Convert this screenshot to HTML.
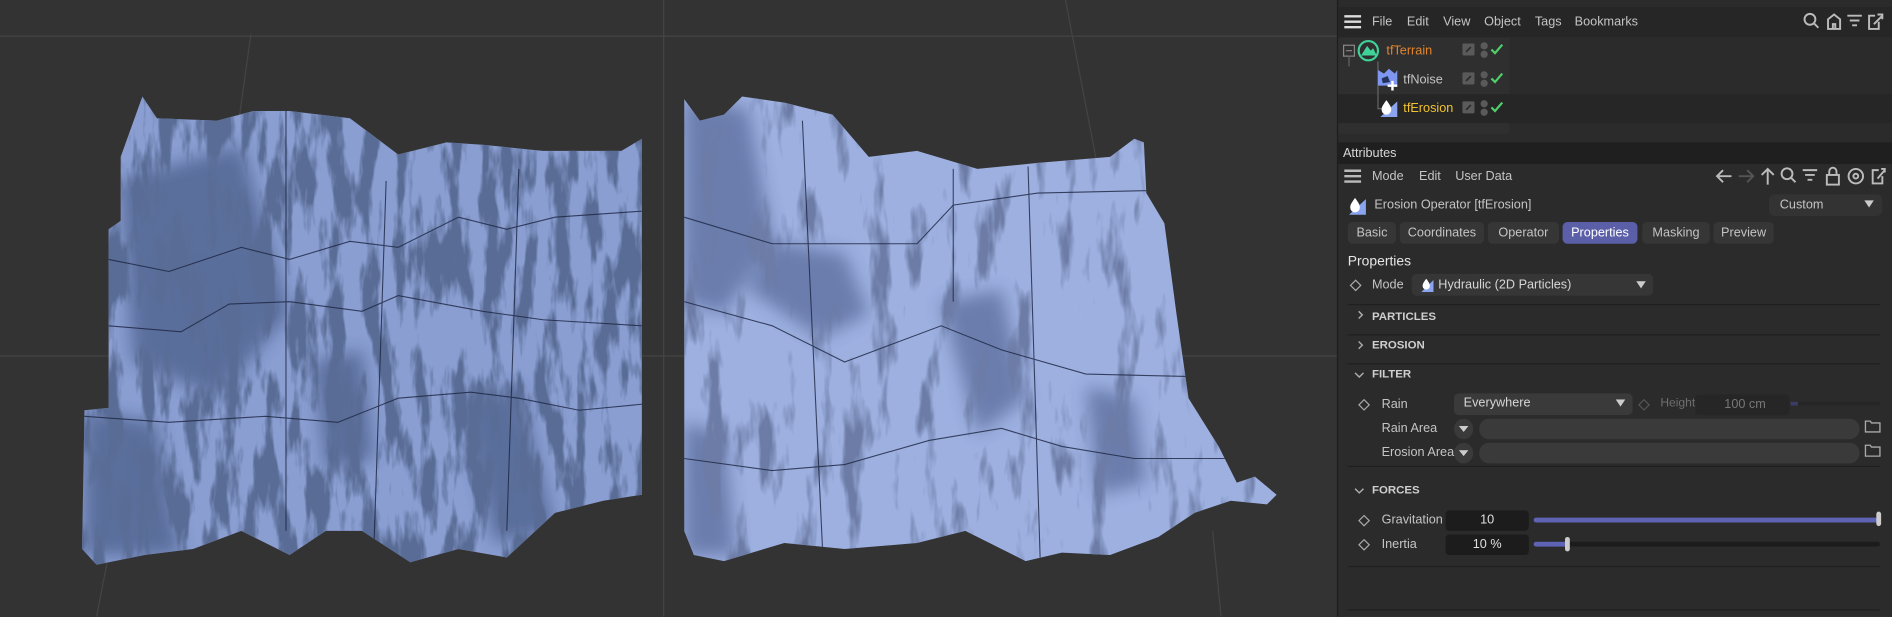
<!DOCTYPE html>
<html><head><meta charset="utf-8">
<style>
*{margin:0;padding:0;box-sizing:border-box}
html,body{width:1892px;height:616px;overflow:hidden;background:#333}
#root{position:absolute;left:0;top:0;width:1568px;height:511px;transform:scale(1.20663);transform-origin:0 0;font-family:"Liberation Sans",sans-serif;font-size:10.5px;color:#c4c4c4}
.a{position:absolute;white-space:nowrap}
.t{line-height:12px;margin-top:-6px}
.hr{position:absolute;height:1px;background:#1f1f1f;left:1117px;width:441px}
.tab{position:absolute;top:184px;height:18px;background:#363636;border-radius:4px;line-height:18px;text-align:center;color:#c4c4c4}
.dia{position:absolute;width:7px;height:7px;border:1.3px solid #aaa;transform:rotate(45deg)}
.sec{font-weight:bold;font-size:9.5px;color:#cfcfcf}
</style></head><body><div id="root">
<svg class="a" style="left:0;top:0" width="1108" height="511" viewBox="0 0 1108 511">
<defs>
<filter id="n1" x="0" y="0" width="100%" height="100%">
<feTurbulence type="fractalNoise" baseFrequency="0.07 0.016" numOctaves="4" seed="3" result="t"/>
<feColorMatrix in="t" type="matrix" values="0 0 0 0 0.1  0 0 0 0 0.15  0 0 0 0 0.3  6 0 0 0 -2.7"/>
</filter>
<filter id="n2" x="0" y="0" width="100%" height="100%">
<feTurbulence type="fractalNoise" baseFrequency="0.05 0.012" numOctaves="4" seed="7" result="t"/>
<feColorMatrix in="t" type="matrix" values="0 0 0 0 0.15  0 0 0 0 0.2  0 0 0 0 0.38  6 0 0 0 -3.3"/>
</filter>
<filter id="bl"><feGaussianBlur stdDeviation="7"/></filter>
<clipPath id="c1"><path d="M118 80 L130 98 L180 100 L210 92 L240 92 L290 98 L330 128 L370 118 L400 120 L450 125 L515 125 L532 115 L532 410 L500 415 L460 425 L420 462 L380 455 L340 466 L300 440 L270 440 L240 460 L200 440 L160 455 L120 460 L80 468 L68 455 L70 340 L90 338 L90 190 L100 183 L100 130 Z"/></clipPath>
<clipPath id="c2"><path d="M567 82 L580 100 L600 95 L615 80 L650 85 L690 95 L720 130 L760 125 L810 140 L860 135 L920 130 L940 115 L948 118 L950 160 L965 185 L975 260 L985 330 L1010 370 L1025 400 L1040 395 L1058 410 L1050 418 L1020 415 L990 425 L960 445 L920 460 L880 458 L850 465 L800 440 L760 450 L700 455 L650 450 L600 465 L575 460 L567 440 Z"/></clipPath>
</defs>
<line x1="0" y1="30" x2="1108" y2="30" stroke="#464646"/>
<line x1="0" y1="295" x2="1108" y2="295" stroke="#464646"/>
<line x1="550" y1="0" x2="550" y2="511" stroke="#464646"/>
<line x1="208" y1="28" x2="170" y2="300" stroke="#444"/>
<line x1="883" y1="0" x2="910" y2="140" stroke="#444"/>
<line x1="90" y1="460" x2="80" y2="511" stroke="#444"/>
<line x1="1005" y1="440" x2="1012" y2="511" stroke="#444"/>
<g clip-path="url(#c1)">
<rect x="60" y="70" width="480" height="410" fill="#8a9ed2"/>
<g filter="url(#bl)" fill="#24345c" opacity=".45">
<path d="M100 150 L200 120 L240 260 L180 330 L110 300Z"/>
<path d="M70 340 L130 350 L150 460 L70 460Z"/>
<path d="M380 330 L430 320 L460 440 L410 450Z"/>
<path d="M260 300 L300 290 L310 380 L270 390Z"/>
</g>
<rect x="60" y="70" width="480" height="410" filter="url(#n1)"/>
<g fill="none" stroke="#1b2440" stroke-width="0.9" opacity=".8">
<polyline points="90,215 140,225 200,205 240,215 290,200 330,205 380,180 420,190 460,180 532,175"/>
<polyline points="90,270 150,275 190,252 240,250 300,258 330,245 400,258 450,265 532,270"/>
<polyline points="70,345 140,350 220,345 280,350 330,330 390,325 430,330 480,340 532,335"/>
<line x1="237" y1="90" x2="237" y2="440"/><line x1="320" y1="150" x2="310" y2="450"/><line x1="430" y1="140" x2="420" y2="440"/>
</g>
</g>
<g clip-path="url(#c2)">
<rect x="560" y="70" width="510" height="410" fill="#9db0e0"/>
<g filter="url(#bl)" fill="#2f4070" opacity=".45">
<path d="M567 82 L620 90 L640 200 L600 260 L567 250Z"/>
<path d="M640 200 L700 210 L720 260 L680 280 L620 240Z"/>
<path d="M780 250 L830 240 L850 330 L810 360Z"/>
<path d="M567 350 L600 360 L610 460 L567 460Z"/>
<path d="M900 320 L940 330 L950 400 L910 410Z"/>
</g>
<rect x="560" y="70" width="510" height="410" filter="url(#n2)"/>
<g fill="none" stroke="#1b2440" stroke-width="0.9" opacity=".8">
<polyline points="567,180 640,202 760,202 790,170 860,160 950,158"/>
<polyline points="567,250 640,270 700,300 780,270 830,290 900,310 985,312"/>
<polyline points="567,380 640,390 700,385 770,365 830,355 880,370 940,380 1015,380"/>
<line x1="665" y1="100" x2="682" y2="462"/><line x1="852" y1="138" x2="862" y2="462"/><line x1="790" y1="140" x2="790" y2="250"/>
</g>
</g>
</svg>
<!-- panel -->
<div class="a" style="left:1108px;top:0;width:460px;height:511px;background:#2b2b2b;border-left:1px solid #1e1e1e"></div>
<div class="a" style="left:1109px;top:6px;width:459px;height:25px;background:#262626"></div>
<div class="a" style="left:1109px;top:31px;width:142px;height:80px;background:#2f2f2f"></div>
<div class="a" style="left:1109px;top:78px;width:459px;height:24px;background:#262626"></div>
<div class="a" style="left:1109px;top:118px;width:459px;height:18px;background:#1f1f1f"></div>
<svg class="a" style="left:1114px;top:12px" width="15" height="12"><path d="M0 1.5H14M0 6H14M0 10.5H14" stroke="#ddd" stroke-width="2"/></svg>
<div class="a t" style="left:1137px;top:18px">File</div>
<div class="a t" style="left:1166px;top:18px">Edit</div>
<div class="a t" style="left:1196px;top:18px">View</div>
<div class="a t" style="left:1230px;top:18px">Object</div>
<div class="a t" style="left:1272px;top:18px">Tags</div>
<div class="a t" style="left:1305px;top:18px">Bookmarks</div>
<svg class="a" style="left:1494px;top:10px" width="70" height="16" fill="none" stroke="#bbb" stroke-width="1.6">
<circle cx="6" cy="6" r="4.5"/><path d="M9.5 9.5L13 13"/>
<path d="M21 14V6L26 2L31 6V14ZM25 14V10H27V14"/>
<path d="M37 3H49M39 7H47M41 11H45"/>
<path d="M63 8V14H55V3H60M59 10L66 3M62 2H66V6"/>
</svg>
<!-- tree -->
<svg class="a" style="left:1112px;top:32px" width="140" height="75" fill="none">
<rect x="1.5" y="5.5" width="9" height="9" stroke="#888"/><path d="M3.5 10H8.5" stroke="#888"/>
<path d="M6 14V23" stroke="#666"/><path d="M30 19V58H38M30 34H32" stroke="#666"/>
<circle cx="22" cy="10" r="8" stroke="#3fd39a" stroke-width="1.8"/><path d="M16 14L21 6L24 10L26 8L29 14Z" fill="#3fd39a"/>
</svg>
<div class="a t" style="left:1149px;top:42px;color:#e2852d">tfTerrain</div>
<svg class="a" style="left:1141px;top:56px" width="20" height="20"><path d="M1 2L6 5L10 1L15 5L17 2V15H1Z" fill="#7f96f0"/><path d="M4 9L9 7L11 12L5 13Z" fill="#22325a"/><path d="M13 11V19M9 15H17" stroke="#fff" stroke-width="2"/></svg>
<div class="a t" style="left:1163px;top:66px">tfNoise</div>
<svg class="a" style="left:1143px;top:80px" width="16" height="18"><path d="M1 17L15 4V17Z" fill="#8aa4f0"/><path d="M6 3C8 6 10 8 10 11A4 4 0 0 1 2 11C2 8 4 6 6 3Z" fill="#fff"/></svg>
<div class="a t" style="left:1163px;top:90px;color:#f2c230">tfErosion</div>
<svg class="a" style="left:1210px;top:33px" width="42" height="66">
<g fill="#5a5a5a"><rect x="2" y="3" width="10" height="10" rx="1"/><rect x="2" y="27" width="10" height="10" rx="1"/><rect x="2" y="51" width="10" height="10" rx="1"/>
<circle cx="20" cy="5" r="3"/><circle cx="20" cy="12" r="3"/><circle cx="20" cy="29" r="3"/><circle cx="20" cy="36" r="3"/><circle cx="20" cy="53" r="3"/><circle cx="20" cy="60" r="3"/></g>
<path d="M5 10L9 6M5 34L9 30M5 58L9 54" stroke="#2b2b2b" stroke-width="1.4"/>
<path d="M26 8L29 11L35 4M26 32L29 35L35 28M26 56L29 59L35 52" stroke="#4fd06a" stroke-width="1.8" fill="none"/>
</svg>
<div class="a t" style="left:1113px;top:127px;color:#d8d8d8">Attributes</div>
<svg class="a" style="left:1114px;top:140px" width="15" height="12"><path d="M0 1.5H14M0 6H14M0 10.5H14" stroke="#bbb" stroke-width="2"/></svg>
<div class="a t" style="left:1137px;top:146px">Mode</div>
<div class="a t" style="left:1176px;top:146px">Edit</div>
<div class="a t" style="left:1206px;top:146px">User Data</div>
<svg class="a" style="left:1421px;top:138px" width="142" height="17" fill="none" stroke="#bbb" stroke-width="1.6">
<path d="M2 8H14M7 3L2 8L7 13"/><path d="M20 8H32M27 3L32 8L27 13" stroke="#555"/>
<path d="M44 2V15M39 7L44 2L49 7"/>
<circle cx="60" cy="6" r="4.5"/><path d="M63.5 9.5L67 13"/>
<path d="M73 3H85M75 7H83M77 11H81"/>
<rect x="93" y="7" width="10" height="8"/><path d="M95 7V4A3 3 0 0 1 101 4V7"/>
<circle cx="117" cy="8" r="6"/><circle cx="117" cy="8" r="2"/>
<path d="M139 8V14H131V3H136M135 10L141 3M138 2H141V5"/>
</svg>
<svg class="a" style="left:1117px;top:161px" width="16" height="18"><path d="M1 17L15 4V17Z" fill="#8aa4f0"/><path d="M6 3C8 6 10 8 10 11A4 4 0 0 1 2 11C2 8 4 6 6 3Z" fill="#fff"/></svg>
<div class="a t" style="left:1139px;top:170px">Erosion Operator [tfErosion]</div>
<div class="a" style="left:1466px;top:161px;width:94px;height:18px;background:#333;border-radius:5px"></div>
<div class="a t" style="left:1475px;top:170px">Custom</div>
<svg class="a" style="left:1545px;top:166px" width="9" height="7"><path d="M0 0H8L4 6Z" fill="#ccc"/></svg>
<div class="tab" style="left:1117px;width:40px">Basic</div>
<div class="tab" style="left:1160px;width:70px">Coordinates</div>
<div class="tab" style="left:1233px;width:59px">Operator</div>
<div class="tab" style="left:1295px;width:62px;background:#5b5fa8;color:#fff">Properties</div>
<div class="tab" style="left:1361px;width:56px">Masking</div>
<div class="tab" style="left:1420px;width:50px">Preview</div>
<div class="a t" style="left:1117px;top:217px;color:#e6e6e6;font-size:11.5px">Properties</div>
<div class="dia" style="left:1120px;top:233px"></div>
<div class="a t" style="left:1137px;top:236px">Mode</div>
<div class="a" style="left:1170px;top:227px;width:200px;height:18px;background:#363636;border-radius:4px"></div>
<svg class="a" style="left:1177px;top:229px" width="12" height="14"><path d="M1 13L11 3V13Z" fill="#8aa4f0"/><path d="M5 2C6.5 4 8 6 8 8A3 3 0 0 1 2 8C2 6 3.5 4 5 2Z" fill="#fff"/></svg>
<div class="a t" style="left:1192px;top:236px;color:#d6d6d6">Hydraulic (2D Particles)</div>
<svg class="a" style="left:1356px;top:233px" width="9" height="7"><path d="M0 0H8L4 6Z" fill="#ccc"/></svg>
<div class="hr" style="top:252px"></div>
<svg class="a" style="left:1124px;top:257px" width="8" height="38" fill="none" stroke="#aaa" stroke-width="1.2"><path d="M2 1L5 4L2 7M2 26L5 29L2 32"/></svg>
<div class="a t sec" style="left:1137px;top:263px">PARTICLES</div>
<div class="hr" style="top:277px"></div>
<div class="a t sec" style="left:1137px;top:287px">EROSION</div>
<div class="hr" style="top:301px"></div>
<svg class="a" style="left:1122px;top:308px" width="10" height="6" fill="none" stroke="#aaa" stroke-width="1.2"><path d="M1 1L4.5 4.5L8 1"/></svg>
<div class="a t sec" style="left:1137px;top:311px">FILTER</div>
<div class="dia" style="left:1127px;top:332px"></div>
<div class="a t" style="left:1145px;top:335px">Rain</div>
<div class="a" style="left:1205px;top:326px;width:148px;height:18px;background:#3a3a3a;border-radius:4px"></div>
<div class="a t" style="left:1213px;top:334px;color:#d6d6d6">Everywhere</div>
<svg class="a" style="left:1339px;top:331px" width="9" height="7"><path d="M0 0H8L4 6Z" fill="#ccc"/></svg>
<div class="dia" style="left:1359px;top:332px;border-color:#555"></div>
<div class="a" style="left:1405px;top:327px;width:78px;height:17px;background:#262626;border-radius:3px"></div>
<div class="a t" style="left:1376px;top:335px;color:#6e6e6e;font-size:10px">Height</div>
<div class="a t" style="left:1429px;top:335px;color:#777">100 cm</div>
<div class="a" style="left:1484px;top:333px;width:74px;height:3px;background:#262626"></div>
<div class="a" style="left:1484px;top:333px;width:6px;height:3px;background:#3c3d66"></div>
<div class="a t" style="left:1145px;top:355px">Rain Area</div>
<div class="a" style="left:1205px;top:347px;width:16px;height:17px;border-radius:50%;background:#3a3a3a"></div>
<svg class="a" style="left:1209px;top:353px" width="9" height="6"><path d="M0 0H8L4 5Z" fill="#ccc"/></svg>
<div class="a" style="left:1226px;top:347px;width:315px;height:17px;background:#3a3a3a;border-radius:8px"></div>
<svg class="a" style="left:1545px;top:348px" width="14" height="11" fill="none" stroke="#aaa" stroke-width="1.1"><path d="M1 1H5L6 2.5H13V10H1Z"/></svg>
<div class="a t" style="left:1145px;top:375px">Erosion Area</div>
<div class="a" style="left:1205px;top:367px;width:16px;height:17px;border-radius:50%;background:#3a3a3a"></div>
<svg class="a" style="left:1209px;top:373px" width="9" height="6"><path d="M0 0H8L4 5Z" fill="#ccc"/></svg>
<div class="a" style="left:1226px;top:367px;width:315px;height:17px;background:#3a3a3a;border-radius:8px"></div>
<svg class="a" style="left:1545px;top:368px" width="14" height="11" fill="none" stroke="#aaa" stroke-width="1.1"><path d="M1 1H5L6 2.5H13V10H1Z"/></svg>
<div class="hr" style="top:386px"></div>
<svg class="a" style="left:1122px;top:404px" width="10" height="6" fill="none" stroke="#aaa" stroke-width="1.2"><path d="M1 1L4.5 4.5L8 1"/></svg>
<div class="a t sec" style="left:1137px;top:407px">FORCES</div>
<div class="dia" style="left:1127px;top:428px"></div>
<div class="a t" style="left:1145px;top:431px">Gravitation</div>
<div class="a" style="left:1198px;top:423px;width:69px;height:17px;background:#1c1c1c;border-radius:3px"></div>
<div class="a t" style="left:1198px;top:431px;width:69px;text-align:center;color:#e0e0e0">10</div>
<div class="a" style="left:1271px;top:429px;width:286px;height:4px;background:#5f63b4;border-radius:2px"></div>
<div class="a" style="left:1555px;top:424px;width:4px;height:12px;background:#ccc;border-radius:2px"></div>
<div class="dia" style="left:1127px;top:448px"></div>
<div class="a t" style="left:1145px;top:451px">Inertia</div>
<div class="a" style="left:1198px;top:443px;width:69px;height:17px;background:#1c1c1c;border-radius:3px"></div>
<div class="a t" style="left:1198px;top:451px;width:69px;text-align:center;color:#e0e0e0">10 %</div>
<div class="a" style="left:1271px;top:449px;width:287px;height:4px;background:#1c1c1c;border-radius:2px"></div>
<div class="a" style="left:1271px;top:449px;width:28px;height:4px;background:#5f63b4;border-radius:2px"></div>
<div class="a" style="left:1297px;top:445px;width:4px;height:12px;background:#ccc;border-radius:2px"></div>
<div class="hr" style="top:469px"></div>
<div class="hr" style="top:505px"></div>
</div></body></html>
